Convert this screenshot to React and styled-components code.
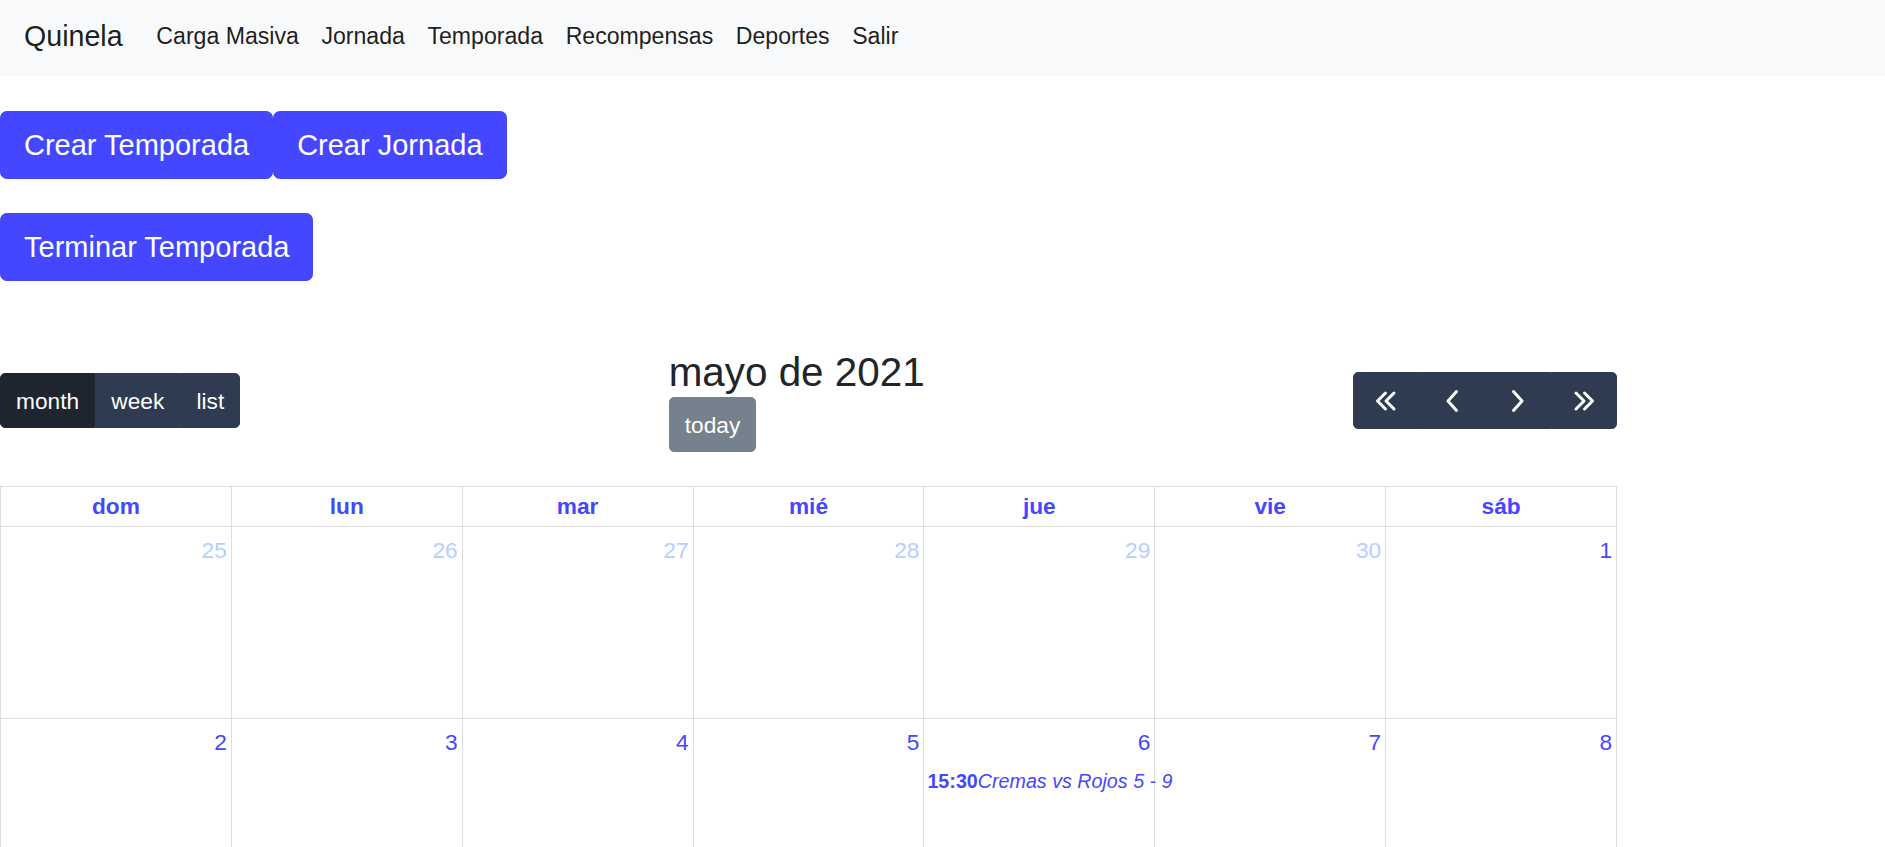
import React from "react";
import styled, { createGlobalStyle } from "styled-components";

const GlobalStyle = createGlobalStyle`
  body {
    margin: 0;
    background: #fff;
    color: #212529;
    font-family: "Liberation Sans", Arial, sans-serif;
  }
  * { box-sizing: border-box; }
`;

const BLUE = "#4447ff";

const Navbar = styled.nav`
  height: 76px;
  padding: 0 22px 4px 24px;
  background: #f8f9fa;
  display: flex;
  align-items: center;
`;

const Brand = styled.a`
  font-size: 28.6px;
  line-height: 42px;
  color: rgba(0, 0, 0, 0.9);
  margin-right: 22.5px;
  text-decoration: none;
`;

const NavLinks = styled.div`
  display: flex;
`;

const NavLink = styled.a`
  font-size: 23.1px;
  line-height: 34px;
  padding: 0 11.3px;
  color: rgba(0, 0, 0, 0.9);
  text-decoration: none;
  cursor: pointer;
`;

const Actions = styled.div`
  display: flex;
  flex-direction: column;
  align-items: flex-start;
  gap: 34px;
  margin-top: 35px;
`;

const ButtonRow = styled.div`
  display: flex;
`;

const BigButton = styled.button`
  font-family: inherit;
  font-size: 29px;
  line-height: 42px;
  padding: 12px 23px;
  border: 1px solid ${BLUE};
  border-radius: 6.7px;
  background: ${BLUE};
  color: #fff;
  cursor: pointer;
`;

const Calendar = styled.div`
  width: 1617px;
  margin-top: 68px;
  font-size: 22.7px;
`;

const Toolbar = styled.div`
  display: flex;
  justify-content: space-between;
  align-items: center;
  margin-bottom: 34px;
`;

const ButtonGroup = styled.div`
  display: flex;
`;

const FcButton = styled.button`
  font-family: inherit;
  font-size: 22.7px;
  line-height: 34px;
  height: ${({ icon }) => (icon ? "57px" : "55px")};
  padding: 0 ${({ icon }) => (icon ? "0" : "15.1px")};
  width: ${({ icon }) => (icon ? "66px" : "auto")};
  display: flex;
  align-items: center;
  justify-content: center;
  color: #fff;
  background: ${({ active }) => (active ? "#1e2530" : "#2e3b51")};
  border: 1px solid ${({ active }) => (active ? "#1e2530" : "#2e3b51")};
  border-radius: 0;
  opacity: ${({ disabled }) => (disabled ? 0.65 : 1)};
  cursor: pointer;

  &:first-child {
    border-top-left-radius: 5px;
    border-bottom-left-radius: 5px;
  }
  &:last-child {
    border-top-right-radius: 5px;
    border-bottom-right-radius: 5px;
  }
`;

const TodayButton = styled(FcButton)`
  border-radius: 5px;
  background: #2c3e50;
  border-color: #2c3e50;
`;

const TitleChunk = styled.div`
  display: flex;
  flex-direction: column;
  align-items: flex-start;
  gap: 1px;
`;

const Title = styled.h2`
  margin: 0;
  font-size: 40.4px;
  line-height: 47px;
  font-weight: 400;
  color: #212529;
`;

const Grid = styled.div`
  display: grid;
  grid-template-columns: repeat(7, 1fr);
  border-top: 1px solid #ddd;
  border-left: 1px solid #ddd;
`;

const HeadCell = styled.div`
  height: 40px;
  display: flex;
  align-items: center;
  justify-content: center;
  border-right: 1px solid #ddd;
  border-bottom: 1px solid #ddd;
  color: ${BLUE};
  font-weight: 700;
`;

const DayCell = styled.div`
  height: 192px;
  border-right: 1px solid #ddd;
  border-bottom: 1px solid #ddd;
  display: flex;
  flex-direction: column;
  min-width: 0;
`;

const DayNumber = styled.div`
  align-self: flex-end;
  padding: 6px 4px 4px;
  line-height: 34px;
  color: ${({ other }) => (other ? "#b5cfff" : BLUE)};
`;

const Event = styled.div`
  margin: 4px 0 0 3px;
  font-size: 19.7px;
  line-height: 29px;
  color: ${BLUE};
  white-space: nowrap;
  position: relative;
  z-index: 1;
`;

const Chevron = ({ dir, double }) => {
  const flip = dir === "right" ? "scale(-1,1) translate(-24,0)" : undefined;
  return (
    <svg width="24" height="24" viewBox="0 0 24 24" fill="none" stroke="#fff" strokeWidth="3" strokeLinecap="round" strokeLinejoin="round">
      <g transform={flip}>
        {double ? (
          <path d="M11.5 4 L3.5 12 L11.5 20 M20 4 L12 12 L20 20" />
        ) : (
          <path d="M16.5 2.5 L8 12 L16.5 21.5" />
        )}
      </g>
    </svg>
  );
};

const weekdays = ["dom", "lun", "mar", "mié", "jue", "vie", "sáb"];

const buildDays = () => {
  const days = [];
  [25, 26, 27, 28, 29, 30].forEach((d) => days.push({ d, other: true }));
  for (let d = 1; d <= 31; d++) days.push({ d, other: false });
  for (let d = 1; d <= 5; d++) days.push({ d, other: true });
  return days;
};

const App = () => {
  const days = buildDays();
  return (
    <>
      <GlobalStyle />
      <Navbar>
        <Brand>Quinela</Brand>
        <NavLinks>
          {["Carga Masiva", "Jornada", "Temporada", "Recompensas", "Deportes", "Salir"].map((l) => (
            <NavLink key={l}>{l}</NavLink>
          ))}
        </NavLinks>
      </Navbar>

      <Actions>
        <ButtonRow>
          <BigButton>Crear Temporada</BigButton>
          <BigButton>Crear Jornada</BigButton>
        </ButtonRow>
        <ButtonRow>
          <BigButton>Terminar Temporada</BigButton>
        </ButtonRow>
      </Actions>

      <Calendar>
        <Toolbar>
          <ButtonGroup>
            <FcButton active>month</FcButton>
            <FcButton>week</FcButton>
            <FcButton>list</FcButton>
          </ButtonGroup>
          <TitleChunk>
            <Title>mayo de 2021</Title>
            <TodayButton disabled>today</TodayButton>
          </TitleChunk>
          <ButtonGroup>
            <FcButton icon>
              <Chevron dir="left" double />
            </FcButton>
            <FcButton icon>
              <Chevron dir="left" />
            </FcButton>
            <FcButton icon>
              <Chevron dir="right" />
            </FcButton>
            <FcButton icon>
              <Chevron dir="right" double />
            </FcButton>
          </ButtonGroup>
        </Toolbar>

        <Grid>
          {weekdays.map((w) => (
            <HeadCell key={w}>{w}</HeadCell>
          ))}
          {days.map((day, i) => (
            <DayCell key={i}>
              <DayNumber other={day.other}>{day.d}</DayNumber>
              {!day.other && day.d === 6 && (
                <Event>
                  <b>15:30</b>
                  <i>Cremas vs Rojos 5 - 9</i>
                </Event>
              )}
            </DayCell>
          ))}
        </Grid>
      </Calendar>
    </>
  );
};

export default App;
